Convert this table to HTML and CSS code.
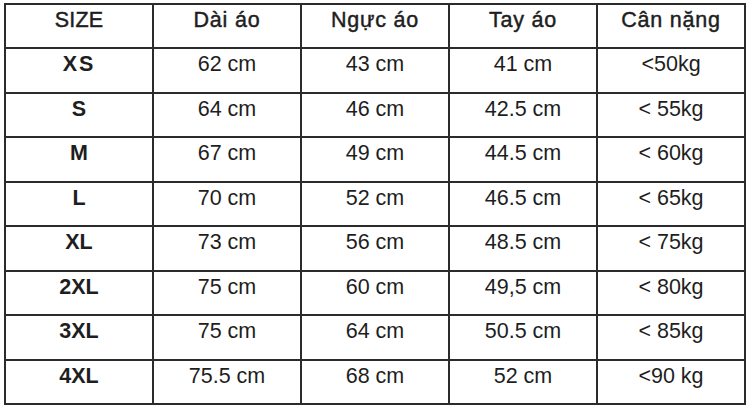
FILE: index.html
```html
<!DOCTYPE html>
<html lang="vi">
<head>
<meta charset="utf-8">
<title>Bảng size</title>
<link rel="stylesheet" href="styles.css">
</head>
<body>
<div class="size-table">
  <div class="cell head tight">SIZE</div>
  <div class="cell head">Dài áo</div>
  <div class="cell head">Ngực áo</div>
  <div class="cell head">Tay áo</div>
  <div class="cell head">Cân nặng</div>

  <div class="cell size wide">XS</div>
  <div class="cell">62 cm</div>
  <div class="cell">43 cm</div>
  <div class="cell">41 cm</div>
  <div class="cell">&lt;50kg</div>

  <div class="cell size">S</div>
  <div class="cell">64 cm</div>
  <div class="cell">46 cm</div>
  <div class="cell">42.5 cm</div>
  <div class="cell">&lt; 55kg</div>

  <div class="cell size">M</div>
  <div class="cell">67 cm</div>
  <div class="cell">49 cm</div>
  <div class="cell">44.5 cm</div>
  <div class="cell">&lt; 60kg</div>

  <div class="cell size">L</div>
  <div class="cell">70 cm</div>
  <div class="cell">52 cm</div>
  <div class="cell">46.5 cm</div>
  <div class="cell">&lt; 65kg</div>

  <div class="cell size">XL</div>
  <div class="cell">73 cm</div>
  <div class="cell">56 cm</div>
  <div class="cell">48.5 cm</div>
  <div class="cell">&lt; 75kg</div>

  <div class="cell size">2XL</div>
  <div class="cell">75 cm</div>
  <div class="cell">60 cm</div>
  <div class="cell">49,5 cm</div>
  <div class="cell">&lt; 80kg</div>

  <div class="cell size">3XL</div>
  <div class="cell">75 cm</div>
  <div class="cell">64 cm</div>
  <div class="cell">50.5 cm</div>
  <div class="cell">&lt; 85kg</div>

  <div class="cell size">4XL</div>
  <div class="cell">75.5 cm</div>
  <div class="cell">68 cm</div>
  <div class="cell">52 cm</div>
  <div class="cell">&lt;90 kg</div>
</div>
</body>
</html>
```
FILE: styles.css
```css
html, body {
  margin: 0;
  background: #ffffff;
}
body {
  padding: 3px 0 0 4px;
  font-family: "Liberation Sans", Arial, sans-serif;
  color: #1e1e1e;
}
.size-table {
  display: grid;
  grid-template-columns: repeat(5, 146px);
  grid-template-rows: repeat(9, 1fr);
  gap: 2px;
  padding: 2px;
  width: 742px;
  height: 402px;
  box-sizing: border-box;
  background: #2b2b2b;
}
.cell {
  background: #ffffff;
  text-align: center;
  font-size: 21.5px;
  line-height: 24px;
  padding-top: 3px;
}
.head {
  letter-spacing: 0.8px;
  -webkit-text-stroke: 0.45px #1e1e1e;
}
.tight {
  letter-spacing: 0.2px;
}
.size {
  font-weight: bold;
}
.wide {
  letter-spacing: 2px;
}
```
